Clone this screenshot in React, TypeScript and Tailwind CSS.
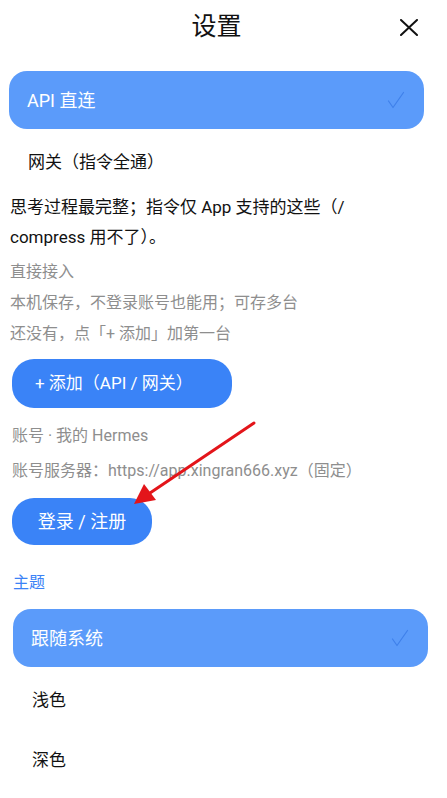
import React from 'react';

const font = { fontFamily: 'Roboto, "Noto Sans CJK SC", sans-serif' };

function Check() {
  return (
    <svg width="18" height="18" viewBox="0 0 18 18" fill="none" className="shrink-0">
      <path d="M1.5 10 L6 16.5 L16.5 1.5" stroke="#3f80ea" strokeWidth="1.2" strokeLinecap="round" strokeLinejoin="round" />
    </svg>
  );
}

function Option({ label, selected, first }: { label: string; selected?: boolean; first?: boolean }) {
  if (selected) {
    return (
      <div className="h-[58px] rounded-[18px] bg-[#5b9bfa] flex items-center justify-between pl-[18px] pr-[19px]">
        <span className="text-[18px] text-white">{label}</span>
        <Check />
      </div>
    );
  }
  return (
    <div className={`h-[60px] flex items-center pl-[19px] ${first ? 'mt-[4px]' : ''}`}>
      <span className="text-[17px] text-[#111]">{label}</span>
    </div>
  );
}

export default function App() {
  return (
    <div className="relative w-[447px] h-[798px] bg-white overflow-hidden" style={font}>
      {/* header */}
      <div className="relative h-[54px] flex items-center justify-center">
        <h1 className="text-[25px] text-[#111] mr-[14px]">设置</h1>
        <svg className="absolute right-[29px] top-[19px]" width="18" height="17" viewBox="0 0 18 17">
          <path d="M1 1 L17 16 M17 1 L1 16" stroke="#111" strokeWidth="2" strokeLinecap="round" />
        </svg>
      </div>

      {/* connection mode */}
      <div className="pl-[9px] pr-[23px] mt-[17px]">
        <Option label="API 直连" selected />
        <Option label="网关（指令全通）" first />
      </div>

      <div className="pl-[10px] pr-[70px]">
        <p className="text-[17px] leading-[30px] text-[#111] -mt-[1px]">
          思考过程最完整；指令仅 App 支持的这些（/ compress 用不了）。
        </p>
        <p className="text-[16px] leading-[24px] text-[#8e8e8e] mt-[8px]">直接接入</p>
        <p className="text-[16px] leading-[24px] text-[#8e8e8e] mt-[7px]">本机保存，不登录账号也能用；可存多台</p>
        <p className="text-[16px] leading-[24px] text-[#8e8e8e] mt-[7px]">还没有，点「+ 添加」加第一台</p>
      </div>

      <div className="pl-[12px]">
        <button className="mt-[13px] h-[49px] w-[220px] pl-[23px] text-left rounded-[22px] bg-[#3a83f7] text-white text-[17px]">
          + 添加（API / 网关）
        </button>
      </div>

      {/* account */}
      <div className="pl-[12px]">
        <p className="text-[16px] leading-[24px] text-[#8e8e8e] mt-[16px]">账号 · 我的 Hermes</p>
        <p className="text-[16px] leading-[24px] text-[#8e8e8e] mt-[11px]">账号服务器：https://app.xingran666.xyz（固定）</p>
        <button className="mt-[15px] h-[47px] w-[140px] rounded-[22px] bg-[#3a83f7] text-white text-[18px]">
          登录 / 注册
        </button>
      </div>

      {/* theme */}
      <div className="pl-[13px] pr-[19px]">
        <p className="text-[16px] leading-[24px] text-[#3b82f6] mt-[26px]">主题</p>
        <div className="mt-[14px]">
          <Option label="跟随系统" selected />
          <Option label="浅色" first />
          <Option label="深色" />
        </div>
      </div>

      {/* red annotation arrow */}
      <svg className="absolute left-0 top-0 pointer-events-none" width="447" height="798" viewBox="0 0 447 798">
        <line x1="254" y1="423" x2="150" y2="493" stroke="#e3151a" strokeWidth="3" strokeLinecap="round" />
        <polygon points="134,504 144,484 156,500" fill="#e3151a" />
      </svg>
    </div>
  );
}
